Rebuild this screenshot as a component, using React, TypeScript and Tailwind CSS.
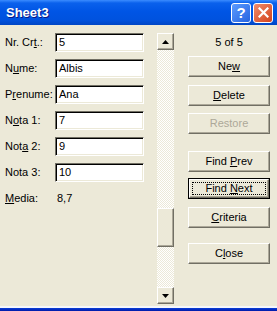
import React from "react";

const fields: { label: React.ReactNode; value: string }[] = [
  { label: <>Nr. Cr<u>t</u>.:</>, value: "5" },
  { label: <>N<u>u</u>me:</>, value: "Albis" },
  { label: <>P<u>r</u>enume:</>, value: "Ana" },
  { label: <>N<u>o</u>ta 1:</>, value: "7" },
  { label: <>Not<u>a</u> 2:</>, value: "9" },
  { label: <>Nota 3:</>, value: "10" },
];

const raised =
  "border border-t-white border-l-white border-r-[#716f64] border-b-[#716f64] shadow-[inset_-1px_-1px_0_#aca899]";

const DlgButton = ({
  children,
  className = "",
  disabled = false,
  isDefault = false,
}: {
  children: React.ReactNode;
  className?: string;
  disabled?: boolean;
  isDefault?: boolean;
}) => {
  if (isDefault) {
    return (
      <div className={`h-[21px] w-[82px] border border-black ${className}`}>
        <div className={`h-full w-full ${raised} flex items-center justify-center p-[2px]`}>
          <div className="h-full w-full border border-dotted border-black flex items-center justify-center">
            <span>{children}</span>
          </div>
        </div>
      </div>
    );
  }
  return (
    <div
      className={`h-[21px] w-[82px] ${raised} flex items-center justify-center ${disabled ? "text-[#aca899]" : ""} ${className}`}
    >
      <span>{children}</span>
    </div>
  );
};

const Arrow = ({ up }: { up: boolean }) => (
  <div className={`h-[17px] w-[17px] bg-[#ece9d8] ${raised} flex items-center justify-center`}>
    <svg width="7" height="4" viewBox="0 0 7 4">
      {up ? <polygon points="3.5,0 7,4 0,4" fill="#000" /> : <polygon points="0,0 7,0 3.5,4" fill="#000" />}
    </svg>
  </div>
);

const App: React.FC = () => {
  return (
    <div
      className="w-[277px] h-[311px] flex flex-col bg-[#ece9d8] text-black text-[11px] overflow-hidden"
      style={{ fontFamily: '"Liberation Sans", Arial, sans-serif' }}
    >
      {/* title bar */}
      <div className="h-[25px] shrink-0 flex items-center justify-between pl-[6px] pr-[4px] bg-[linear-gradient(to_bottom,#3b8cff_0%,#0a61ec_12%,#0055e5_45%,#0052de_80%,#0045c4_100%)]">
        <span className="text-white font-bold text-[13px] [text-shadow:1px_1px_0_#0a1883]">Sheet3</span>
        <div className="flex gap-[2px]">
          <div className="h-[20px] w-[20px] rounded-[3px] border border-white bg-[linear-gradient(135deg,#5c9cff,#2663e0)] flex items-center justify-center text-white font-bold text-[15px] leading-none">
            ?
          </div>
          <div className="h-[20px] w-[20px] rounded-[3px] border border-white bg-[linear-gradient(135deg,#f08c6c,#d3421c)] flex items-center justify-center">
            <svg width="11" height="11" viewBox="0 0 11 11">
              <path d="M1.5 1.5 L9.5 9.5 M9.5 1.5 L1.5 9.5" stroke="#fff" strokeWidth="2.2" strokeLinecap="square" />
            </svg>
          </div>
        </div>
      </div>

      {/* body */}
      <div className="flex-1 flex pt-[8px] pl-[5px]">
        <div className="flex flex-col gap-[7px]">
          {fields.map((f, i) => (
            <div key={i} className="h-[19px] flex items-center">
              <span className="w-[50px]">{f.label}</span>
              <div className="h-[19px] w-[89px] bg-white border border-t-[#716f64] border-l-[#716f64] border-b-white border-r-white shadow-[inset_1px_1px_0_#000,inset_-1px_-1px_0_#ece9d8] flex items-center pl-[3px]">
                {f.value}
              </div>
            </div>
          ))}
          <div className="h-[19px] flex items-center">
            <span className="w-[52px]">
              <u>M</u>edia:
            </span>
            <span>8,7</span>
          </div>
        </div>

        {/* scrollbar */}
        <div className="ml-[13px] w-[17px] h-[271px] flex flex-col bg-[image:repeating-conic-gradient(#ffffff_0_25%,#ece9d8_0_50%)] bg-[length:2px_2px]">
          <Arrow up />
          <div className={`mt-[158px] h-[39px] w-[17px] bg-[#ece9d8] ${raised}`} />
          <div className="flex-1" />
          <Arrow up={false} />
        </div>

        {/* buttons */}
        <div className="ml-[14px] flex flex-col">
          <div className="h-[19px] flex items-center justify-center w-[82px]">5 of 5</div>
          <DlgButton className="mt-[4px]">
            Ne<u>w</u>
          </DlgButton>
          <DlgButton className="mt-[8px]">
            <u>D</u>elete
          </DlgButton>
          <DlgButton className="mt-[7px]" disabled>
            Restore
          </DlgButton>
          <DlgButton className="mt-[17px]">
            Find <u>P</u>rev
          </DlgButton>
          <DlgButton className="mt-[6px]" isDefault>
            Find <u>N</u>ext
          </DlgButton>
          <DlgButton className="mt-[8px]">
            <u>C</u>riteria
          </DlgButton>
          <DlgButton className="mt-[15px]">
            C<u>l</u>ose
          </DlgButton>
        </div>
      </div>

      {/* bottom frame */}
      <div className="h-[2px] shrink-0 bg-[#f4f6fb]" />
      <div className="h-[3px] shrink-0 bg-[linear-gradient(to_bottom,#0a3fd8,#0019a8)]" />
    </div>
  );
};

export default App;
